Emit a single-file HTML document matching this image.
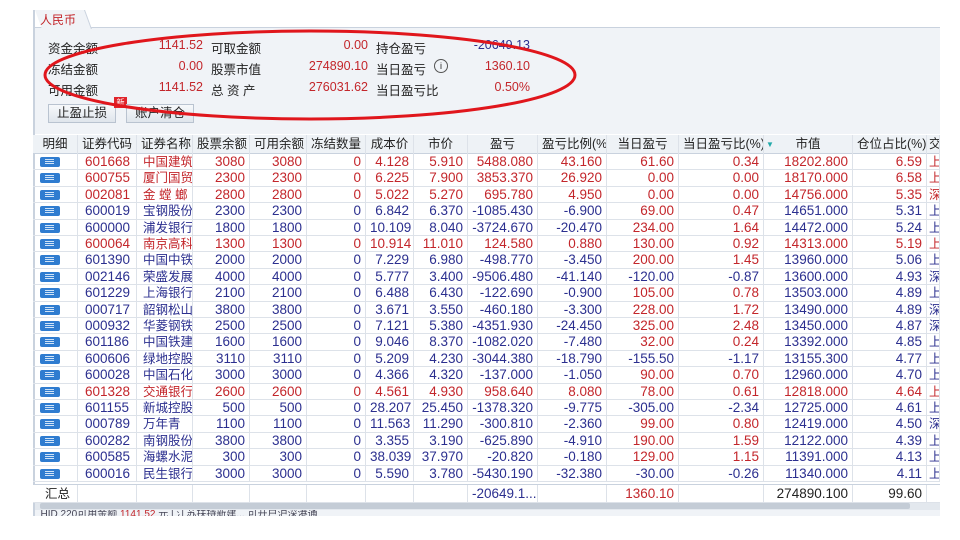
<!DOCTYPE html>
<html><head><meta charset="utf-8"><style>
*{margin:0;padding:0;box-sizing:border-box}
body{width:960px;height:540px;background:#fff;position:relative;overflow:hidden;font-family:"Liberation Sans","Noto Sans CJK SC",sans-serif;font-size:12.5px;color:#222}
.a{position:absolute;white-space:nowrap}
.r{color:#c3262b}.b{color:#2b2f8f}
.row{position:absolute;left:33px;width:907px;height:16.4px;border-bottom:1px solid #dde2e9;font-size:13.5px}
.c{position:absolute;top:0;height:16.4px;line-height:16px;border-right:1px solid #dde2e9;overflow:hidden;white-space:nowrap;padding:0 4px;text-align:right}
.l{text-align:left;padding-left:7px}
.n{font-size:12.5px;padding-left:6px}
.hd .c{font-size:12.5px}
.ic{position:absolute;left:7px;top:3px;width:20px;height:10px;background:#2f7cd0;border-radius:2px}
.ic:after{content:"";position:absolute;left:5px;top:2px;width:9px;height:1px;background:#cfe3f8;box-shadow:0 2px 0 #cfe3f8,0 4px 0 #cfe3f8}
</style></head><body>
<div class="a" style="left:33px;top:10px;width:907px;height:506px;background:#f0f3f7;border-left:2px solid #c9d2de"></div>
<div class="a" style="left:35px;top:10px;width:905px;height:18px;background:#fff;border-bottom:1px solid #c9d2de"></div>
<div class="a" style="left:35px;top:10px;width:50px;height:19px;background:#f0f3f7;border-right:1px solid #c9d2de;transform:skewX(20deg);transform-origin:left top"></div>
<div class="a r" style="left:40px;top:11px;font-size:12px">人民币</div>
<div class="a" style="left:48px;top:38px">资金余额</div><div class="a r" style="left:140px;top:38px;width:63px;text-align:right">1141.52</div>
<div class="a" style="left:48px;top:59px">冻结金额</div><div class="a r" style="left:140px;top:59px;width:63px;text-align:right">0.00</div>
<div class="a" style="left:48px;top:80px">可用金额</div><div class="a r" style="left:140px;top:80px;width:63px;text-align:right">1141.52</div>
<div class="a" style="left:211px;top:38px">可取金额</div><div class="a r" style="left:280px;top:38px;width:88px;text-align:right">0.00</div>
<div class="a" style="left:211px;top:59px">股票市值</div><div class="a r" style="left:280px;top:59px;width:88px;text-align:right">274890.10</div>
<div class="a" style="left:211px;top:80px">总 资 产</div><div class="a r" style="left:280px;top:80px;width:88px;text-align:right">276031.62</div>
<div class="a" style="left:376px;top:38px">持仓盈亏</div><div class="a b" style="left:440px;top:38px;width:90px;text-align:right">-20649.13</div>
<div class="a" style="left:376px;top:59px">当日盈亏</div><div class="a" style="left:434px;top:59px;width:14px;height:14px;border:1px solid #555;border-radius:50%;font-size:9px;text-align:center;line-height:12px">i</div><div class="a r" style="left:440px;top:59px;width:90px;text-align:right">1360.10</div>
<div class="a" style="left:376px;top:80px">当日盈亏比</div><div class="a r" style="left:440px;top:80px;width:90px;text-align:right">0.50%</div>
<div class="a" style="left:48px;top:104px;width:68px;height:19px;border:1px solid #b9c3d0;background:linear-gradient(#f7f9fb,#dfe5ec);text-align:center;line-height:17px">止盈止损</div>
<div class="a" style="left:114px;top:97px;width:13px;height:11px;background:#e0242b;color:#fff;font-size:8px;text-align:center;line-height:11px">新</div>
<div class="a" style="left:126px;top:104px;width:68px;height:19px;border:1px solid #b9c3d0;background:linear-gradient(#f7f9fb,#dfe5ec);text-align:center;line-height:17px">账户清仓</div>
<svg class="a" style="left:0;top:0" width="960" height="140"><ellipse cx="310" cy="75" rx="265" ry="44" fill="none" stroke="#e0161c" stroke-width="3"/></svg>
<div class="a" style="left:35px;top:134px;width:905px;height:350px;background:#fff"></div>
<div class="row hd" style="top:135px;height:19px;background:#eef2f6;border-bottom:1px solid #c9d2de">
<div class="c" style="left:0;width:45px;text-align:center;height:19px;line-height:19px">明细</div><div class="c" style="left:45px;width:59px;text-align:center;height:19px;line-height:19px">证券代码</div><div class="c" style="left:104px;width:56px;text-align:center;height:19px;line-height:19px">证券名称</div><div class="c" style="left:160px;width:57px;text-align:center;height:19px;line-height:19px">股票余额</div><div class="c" style="left:217px;width:57px;text-align:center;height:19px;line-height:19px">可用余额</div><div class="c" style="left:274px;width:59px;text-align:center;height:19px;line-height:19px">冻结数量</div><div class="c" style="left:333px;width:48px;text-align:center;height:19px;line-height:19px">成本价</div><div class="c" style="left:381px;width:54px;text-align:center;height:19px;line-height:19px">市价</div><div class="c" style="left:435px;width:70px;text-align:center;height:19px;line-height:19px">盈亏</div><div class="c" style="left:505px;width:69px;text-align:center;height:19px;line-height:19px">盈亏比例(%)</div><div class="c" style="left:574px;width:72px;text-align:center;height:19px;line-height:19px">当日盈亏</div><div class="c" style="left:646px;width:85px;text-align:center;height:19px;line-height:19px">当日盈亏比(%)</div><div class="c" style="left:731px;width:89px;text-align:center;height:19px;line-height:19px"><span style="color:#2aa;font-size:8px;position:absolute;left:2px">▼</span>市值</div><div class="c" style="left:820px;width:74px;text-align:center;height:19px;line-height:19px">仓位占比(%)</div><div class="c" style="left:894px;width:13px;text-align:left;height:19px;line-height:19px;padding:0 2px">交</div></div>
<div class="row r" style="top:154px"><div class="ic"></div><div class="c" style="left:0;width:45px"></div><div class="c l" style="left:45px;width:59px">601668</div><div class="c l n" style="left:104px;width:56px">中国建筑</div><div class="c" style="left:160px;width:57px">3080</div><div class="c" style="left:217px;width:57px">3080</div><div class="c" style="left:274px;width:59px">0</div><div class="c" style="left:333px;width:48px">4.128</div><div class="c" style="left:381px;width:54px">5.910</div><div class="c" style="left:435px;width:70px">5488.080</div><div class="c" style="left:505px;width:69px">43.160</div><div class="c r" style="left:574px;width:72px">61.60</div><div class="c r" style="left:646px;width:85px">0.34</div><div class="c" style="left:731px;width:89px">18202.800</div><div class="c" style="left:820px;width:74px">6.59</div><div class="c l n" style="left:894px;width:13px;padding:0 2px">上</div></div>
<div class="row r" style="top:170.4px"><div class="ic"></div><div class="c" style="left:0;width:45px"></div><div class="c l" style="left:45px;width:59px">600755</div><div class="c l n" style="left:104px;width:56px">厦门国贸</div><div class="c" style="left:160px;width:57px">2300</div><div class="c" style="left:217px;width:57px">2300</div><div class="c" style="left:274px;width:59px">0</div><div class="c" style="left:333px;width:48px">6.225</div><div class="c" style="left:381px;width:54px">7.900</div><div class="c" style="left:435px;width:70px">3853.370</div><div class="c" style="left:505px;width:69px">26.920</div><div class="c r" style="left:574px;width:72px">0.00</div><div class="c r" style="left:646px;width:85px">0.00</div><div class="c" style="left:731px;width:89px">18170.000</div><div class="c" style="left:820px;width:74px">6.58</div><div class="c l n" style="left:894px;width:13px;padding:0 2px">上</div></div>
<div class="row r" style="top:186.8px"><div class="ic"></div><div class="c" style="left:0;width:45px"></div><div class="c l" style="left:45px;width:59px">002081</div><div class="c l n" style="left:104px;width:56px">金 螳 螂</div><div class="c" style="left:160px;width:57px">2800</div><div class="c" style="left:217px;width:57px">2800</div><div class="c" style="left:274px;width:59px">0</div><div class="c" style="left:333px;width:48px">5.022</div><div class="c" style="left:381px;width:54px">5.270</div><div class="c" style="left:435px;width:70px">695.780</div><div class="c" style="left:505px;width:69px">4.950</div><div class="c r" style="left:574px;width:72px">0.00</div><div class="c r" style="left:646px;width:85px">0.00</div><div class="c" style="left:731px;width:89px">14756.000</div><div class="c" style="left:820px;width:74px">5.35</div><div class="c l n" style="left:894px;width:13px;padding:0 2px">深</div></div>
<div class="row b" style="top:203.2px"><div class="ic"></div><div class="c" style="left:0;width:45px"></div><div class="c l" style="left:45px;width:59px">600019</div><div class="c l n" style="left:104px;width:56px">宝钢股份</div><div class="c" style="left:160px;width:57px">2300</div><div class="c" style="left:217px;width:57px">2300</div><div class="c" style="left:274px;width:59px">0</div><div class="c" style="left:333px;width:48px">6.842</div><div class="c" style="left:381px;width:54px">6.370</div><div class="c" style="left:435px;width:70px">-1085.430</div><div class="c" style="left:505px;width:69px">-6.900</div><div class="c r" style="left:574px;width:72px">69.00</div><div class="c r" style="left:646px;width:85px">0.47</div><div class="c" style="left:731px;width:89px">14651.000</div><div class="c" style="left:820px;width:74px">5.31</div><div class="c l n" style="left:894px;width:13px;padding:0 2px">上</div></div>
<div class="row b" style="top:219.6px"><div class="ic"></div><div class="c" style="left:0;width:45px"></div><div class="c l" style="left:45px;width:59px">600000</div><div class="c l n" style="left:104px;width:56px">浦发银行</div><div class="c" style="left:160px;width:57px">1800</div><div class="c" style="left:217px;width:57px">1800</div><div class="c" style="left:274px;width:59px">0</div><div class="c" style="left:333px;width:48px">10.109</div><div class="c" style="left:381px;width:54px">8.040</div><div class="c" style="left:435px;width:70px">-3724.670</div><div class="c" style="left:505px;width:69px">-20.470</div><div class="c r" style="left:574px;width:72px">234.00</div><div class="c r" style="left:646px;width:85px">1.64</div><div class="c" style="left:731px;width:89px">14472.000</div><div class="c" style="left:820px;width:74px">5.24</div><div class="c l n" style="left:894px;width:13px;padding:0 2px">上</div></div>
<div class="row r" style="top:236px"><div class="ic"></div><div class="c" style="left:0;width:45px"></div><div class="c l" style="left:45px;width:59px">600064</div><div class="c l n" style="left:104px;width:56px">南京高科</div><div class="c" style="left:160px;width:57px">1300</div><div class="c" style="left:217px;width:57px">1300</div><div class="c" style="left:274px;width:59px">0</div><div class="c" style="left:333px;width:48px">10.914</div><div class="c" style="left:381px;width:54px">11.010</div><div class="c" style="left:435px;width:70px">124.580</div><div class="c" style="left:505px;width:69px">0.880</div><div class="c r" style="left:574px;width:72px">130.00</div><div class="c r" style="left:646px;width:85px">0.92</div><div class="c" style="left:731px;width:89px">14313.000</div><div class="c" style="left:820px;width:74px">5.19</div><div class="c l n" style="left:894px;width:13px;padding:0 2px">上</div></div>
<div class="row b" style="top:252.4px"><div class="ic"></div><div class="c" style="left:0;width:45px"></div><div class="c l" style="left:45px;width:59px">601390</div><div class="c l n" style="left:104px;width:56px">中国中铁</div><div class="c" style="left:160px;width:57px">2000</div><div class="c" style="left:217px;width:57px">2000</div><div class="c" style="left:274px;width:59px">0</div><div class="c" style="left:333px;width:48px">7.229</div><div class="c" style="left:381px;width:54px">6.980</div><div class="c" style="left:435px;width:70px">-498.770</div><div class="c" style="left:505px;width:69px">-3.450</div><div class="c r" style="left:574px;width:72px">200.00</div><div class="c r" style="left:646px;width:85px">1.45</div><div class="c" style="left:731px;width:89px">13960.000</div><div class="c" style="left:820px;width:74px">5.06</div><div class="c l n" style="left:894px;width:13px;padding:0 2px">上</div></div>
<div class="row b" style="top:268.8px"><div class="ic"></div><div class="c" style="left:0;width:45px"></div><div class="c l" style="left:45px;width:59px">002146</div><div class="c l n" style="left:104px;width:56px">荣盛发展</div><div class="c" style="left:160px;width:57px">4000</div><div class="c" style="left:217px;width:57px">4000</div><div class="c" style="left:274px;width:59px">0</div><div class="c" style="left:333px;width:48px">5.777</div><div class="c" style="left:381px;width:54px">3.400</div><div class="c" style="left:435px;width:70px">-9506.480</div><div class="c" style="left:505px;width:69px">-41.140</div><div class="c b" style="left:574px;width:72px">-120.00</div><div class="c b" style="left:646px;width:85px">-0.87</div><div class="c" style="left:731px;width:89px">13600.000</div><div class="c" style="left:820px;width:74px">4.93</div><div class="c l n" style="left:894px;width:13px;padding:0 2px">深</div></div>
<div class="row b" style="top:285.2px"><div class="ic"></div><div class="c" style="left:0;width:45px"></div><div class="c l" style="left:45px;width:59px">601229</div><div class="c l n" style="left:104px;width:56px">上海银行</div><div class="c" style="left:160px;width:57px">2100</div><div class="c" style="left:217px;width:57px">2100</div><div class="c" style="left:274px;width:59px">0</div><div class="c" style="left:333px;width:48px">6.488</div><div class="c" style="left:381px;width:54px">6.430</div><div class="c" style="left:435px;width:70px">-122.690</div><div class="c" style="left:505px;width:69px">-0.900</div><div class="c r" style="left:574px;width:72px">105.00</div><div class="c r" style="left:646px;width:85px">0.78</div><div class="c" style="left:731px;width:89px">13503.000</div><div class="c" style="left:820px;width:74px">4.89</div><div class="c l n" style="left:894px;width:13px;padding:0 2px">上</div></div>
<div class="row b" style="top:301.6px"><div class="ic"></div><div class="c" style="left:0;width:45px"></div><div class="c l" style="left:45px;width:59px">000717</div><div class="c l n" style="left:104px;width:56px">韶钢松山</div><div class="c" style="left:160px;width:57px">3800</div><div class="c" style="left:217px;width:57px">3800</div><div class="c" style="left:274px;width:59px">0</div><div class="c" style="left:333px;width:48px">3.671</div><div class="c" style="left:381px;width:54px">3.550</div><div class="c" style="left:435px;width:70px">-460.180</div><div class="c" style="left:505px;width:69px">-3.300</div><div class="c r" style="left:574px;width:72px">228.00</div><div class="c r" style="left:646px;width:85px">1.72</div><div class="c" style="left:731px;width:89px">13490.000</div><div class="c" style="left:820px;width:74px">4.89</div><div class="c l n" style="left:894px;width:13px;padding:0 2px">深</div></div>
<div class="row b" style="top:318px"><div class="ic"></div><div class="c" style="left:0;width:45px"></div><div class="c l" style="left:45px;width:59px">000932</div><div class="c l n" style="left:104px;width:56px">华菱钢铁</div><div class="c" style="left:160px;width:57px">2500</div><div class="c" style="left:217px;width:57px">2500</div><div class="c" style="left:274px;width:59px">0</div><div class="c" style="left:333px;width:48px">7.121</div><div class="c" style="left:381px;width:54px">5.380</div><div class="c" style="left:435px;width:70px">-4351.930</div><div class="c" style="left:505px;width:69px">-24.450</div><div class="c r" style="left:574px;width:72px">325.00</div><div class="c r" style="left:646px;width:85px">2.48</div><div class="c" style="left:731px;width:89px">13450.000</div><div class="c" style="left:820px;width:74px">4.87</div><div class="c l n" style="left:894px;width:13px;padding:0 2px">深</div></div>
<div class="row b" style="top:334.4px"><div class="ic"></div><div class="c" style="left:0;width:45px"></div><div class="c l" style="left:45px;width:59px">601186</div><div class="c l n" style="left:104px;width:56px">中国铁建</div><div class="c" style="left:160px;width:57px">1600</div><div class="c" style="left:217px;width:57px">1600</div><div class="c" style="left:274px;width:59px">0</div><div class="c" style="left:333px;width:48px">9.046</div><div class="c" style="left:381px;width:54px">8.370</div><div class="c" style="left:435px;width:70px">-1082.020</div><div class="c" style="left:505px;width:69px">-7.480</div><div class="c r" style="left:574px;width:72px">32.00</div><div class="c r" style="left:646px;width:85px">0.24</div><div class="c" style="left:731px;width:89px">13392.000</div><div class="c" style="left:820px;width:74px">4.85</div><div class="c l n" style="left:894px;width:13px;padding:0 2px">上</div></div>
<div class="row b" style="top:350.8px"><div class="ic"></div><div class="c" style="left:0;width:45px"></div><div class="c l" style="left:45px;width:59px">600606</div><div class="c l n" style="left:104px;width:56px">绿地控股</div><div class="c" style="left:160px;width:57px">3110</div><div class="c" style="left:217px;width:57px">3110</div><div class="c" style="left:274px;width:59px">0</div><div class="c" style="left:333px;width:48px">5.209</div><div class="c" style="left:381px;width:54px">4.230</div><div class="c" style="left:435px;width:70px">-3044.380</div><div class="c" style="left:505px;width:69px">-18.790</div><div class="c b" style="left:574px;width:72px">-155.50</div><div class="c b" style="left:646px;width:85px">-1.17</div><div class="c" style="left:731px;width:89px">13155.300</div><div class="c" style="left:820px;width:74px">4.77</div><div class="c l n" style="left:894px;width:13px;padding:0 2px">上</div></div>
<div class="row b" style="top:367.2px"><div class="ic"></div><div class="c" style="left:0;width:45px"></div><div class="c l" style="left:45px;width:59px">600028</div><div class="c l n" style="left:104px;width:56px">中国石化</div><div class="c" style="left:160px;width:57px">3000</div><div class="c" style="left:217px;width:57px">3000</div><div class="c" style="left:274px;width:59px">0</div><div class="c" style="left:333px;width:48px">4.366</div><div class="c" style="left:381px;width:54px">4.320</div><div class="c" style="left:435px;width:70px">-137.000</div><div class="c" style="left:505px;width:69px">-1.050</div><div class="c r" style="left:574px;width:72px">90.00</div><div class="c r" style="left:646px;width:85px">0.70</div><div class="c" style="left:731px;width:89px">12960.000</div><div class="c" style="left:820px;width:74px">4.70</div><div class="c l n" style="left:894px;width:13px;padding:0 2px">上</div></div>
<div class="row r" style="top:383.6px"><div class="ic"></div><div class="c" style="left:0;width:45px"></div><div class="c l" style="left:45px;width:59px">601328</div><div class="c l n" style="left:104px;width:56px">交通银行</div><div class="c" style="left:160px;width:57px">2600</div><div class="c" style="left:217px;width:57px">2600</div><div class="c" style="left:274px;width:59px">0</div><div class="c" style="left:333px;width:48px">4.561</div><div class="c" style="left:381px;width:54px">4.930</div><div class="c" style="left:435px;width:70px">958.640</div><div class="c" style="left:505px;width:69px">8.080</div><div class="c r" style="left:574px;width:72px">78.00</div><div class="c r" style="left:646px;width:85px">0.61</div><div class="c" style="left:731px;width:89px">12818.000</div><div class="c" style="left:820px;width:74px">4.64</div><div class="c l n" style="left:894px;width:13px;padding:0 2px">上</div></div>
<div class="row b" style="top:400px"><div class="ic"></div><div class="c" style="left:0;width:45px"></div><div class="c l" style="left:45px;width:59px">601155</div><div class="c l n" style="left:104px;width:56px">新城控股</div><div class="c" style="left:160px;width:57px">500</div><div class="c" style="left:217px;width:57px">500</div><div class="c" style="left:274px;width:59px">0</div><div class="c" style="left:333px;width:48px">28.207</div><div class="c" style="left:381px;width:54px">25.450</div><div class="c" style="left:435px;width:70px">-1378.320</div><div class="c" style="left:505px;width:69px">-9.775</div><div class="c b" style="left:574px;width:72px">-305.00</div><div class="c b" style="left:646px;width:85px">-2.34</div><div class="c" style="left:731px;width:89px">12725.000</div><div class="c" style="left:820px;width:74px">4.61</div><div class="c l n" style="left:894px;width:13px;padding:0 2px">上</div></div>
<div class="row b" style="top:416.4px"><div class="ic"></div><div class="c" style="left:0;width:45px"></div><div class="c l" style="left:45px;width:59px">000789</div><div class="c l n" style="left:104px;width:56px">万年青</div><div class="c" style="left:160px;width:57px">1100</div><div class="c" style="left:217px;width:57px">1100</div><div class="c" style="left:274px;width:59px">0</div><div class="c" style="left:333px;width:48px">11.563</div><div class="c" style="left:381px;width:54px">11.290</div><div class="c" style="left:435px;width:70px">-300.810</div><div class="c" style="left:505px;width:69px">-2.360</div><div class="c r" style="left:574px;width:72px">99.00</div><div class="c r" style="left:646px;width:85px">0.80</div><div class="c" style="left:731px;width:89px">12419.000</div><div class="c" style="left:820px;width:74px">4.50</div><div class="c l n" style="left:894px;width:13px;padding:0 2px">深</div></div>
<div class="row b" style="top:432.8px"><div class="ic"></div><div class="c" style="left:0;width:45px"></div><div class="c l" style="left:45px;width:59px">600282</div><div class="c l n" style="left:104px;width:56px">南钢股份</div><div class="c" style="left:160px;width:57px">3800</div><div class="c" style="left:217px;width:57px">3800</div><div class="c" style="left:274px;width:59px">0</div><div class="c" style="left:333px;width:48px">3.355</div><div class="c" style="left:381px;width:54px">3.190</div><div class="c" style="left:435px;width:70px">-625.890</div><div class="c" style="left:505px;width:69px">-4.910</div><div class="c r" style="left:574px;width:72px">190.00</div><div class="c r" style="left:646px;width:85px">1.59</div><div class="c" style="left:731px;width:89px">12122.000</div><div class="c" style="left:820px;width:74px">4.39</div><div class="c l n" style="left:894px;width:13px;padding:0 2px">上</div></div>
<div class="row b" style="top:449.2px"><div class="ic"></div><div class="c" style="left:0;width:45px"></div><div class="c l" style="left:45px;width:59px">600585</div><div class="c l n" style="left:104px;width:56px">海螺水泥</div><div class="c" style="left:160px;width:57px">300</div><div class="c" style="left:217px;width:57px">300</div><div class="c" style="left:274px;width:59px">0</div><div class="c" style="left:333px;width:48px">38.039</div><div class="c" style="left:381px;width:54px">37.970</div><div class="c" style="left:435px;width:70px">-20.820</div><div class="c" style="left:505px;width:69px">-0.180</div><div class="c r" style="left:574px;width:72px">129.00</div><div class="c r" style="left:646px;width:85px">1.15</div><div class="c" style="left:731px;width:89px">11391.000</div><div class="c" style="left:820px;width:74px">4.13</div><div class="c l n" style="left:894px;width:13px;padding:0 2px">上</div></div>
<div class="row b" style="top:465.6px"><div class="ic"></div><div class="c" style="left:0;width:45px"></div><div class="c l" style="left:45px;width:59px">600016</div><div class="c l n" style="left:104px;width:56px">民生银行</div><div class="c" style="left:160px;width:57px">3000</div><div class="c" style="left:217px;width:57px">3000</div><div class="c" style="left:274px;width:59px">0</div><div class="c" style="left:333px;width:48px">5.590</div><div class="c" style="left:381px;width:54px">3.780</div><div class="c" style="left:435px;width:70px">-5430.190</div><div class="c" style="left:505px;width:69px">-32.380</div><div class="c b" style="left:574px;width:72px">-30.00</div><div class="c b" style="left:646px;width:85px">-0.26</div><div class="c" style="left:731px;width:89px">11340.000</div><div class="c" style="left:820px;width:74px">4.11</div><div class="c l n" style="left:894px;width:13px;padding:0 2px">上</div></div>
<div class="row" style="top:484px;height:19px;border-top:1px solid #c9d2de;background:#fff"><div class="c l n" style="left:0;width:45px;height:19px;line-height:18px;padding-left:12px">汇总</div><div class="c" style="left:45px;width:59px;height:19px"></div><div class="c" style="left:104px;width:56px;height:19px"></div><div class="c" style="left:160px;width:57px;height:19px"></div><div class="c" style="left:217px;width:57px;height:19px"></div><div class="c" style="left:274px;width:59px;height:19px"></div><div class="c" style="left:333px;width:48px;height:19px"></div><div class="c" style="left:381px;width:54px;height:19px"></div><div class="c b" style="left:435px;width:70px;height:19px;line-height:18px">-20649.1...</div><div class="c" style="left:505px;width:69px;height:19px"></div><div class="c r" style="left:574px;width:72px;height:19px;line-height:18px">1360.10</div><div class="c" style="left:646px;width:85px;height:19px"></div><div class="c" style="left:731px;width:89px;height:19px;line-height:18px">274890.100</div><div class="c" style="left:820px;width:74px;height:19px;line-height:18px">99.60</div></div>
<div class="a" style="left:35px;top:503px;width:905px;height:7px;background:#e3e8ee"></div>
<div class="a" style="left:40px;top:503px;width:870px;height:6px;background:#c4ccd6;border-radius:2px"></div>
<div class="a" style="left:35px;top:510px;width:905px;height:6px;background:#f0f3f7;overflow:hidden;font-size:10px;line-height:10px;color:#445">&nbsp;&nbsp;HID 220可用金额 <span class="r">1141.52</span> 元 | 江苏扶持新建... 可开户沪深港通</div>
</body></html>
